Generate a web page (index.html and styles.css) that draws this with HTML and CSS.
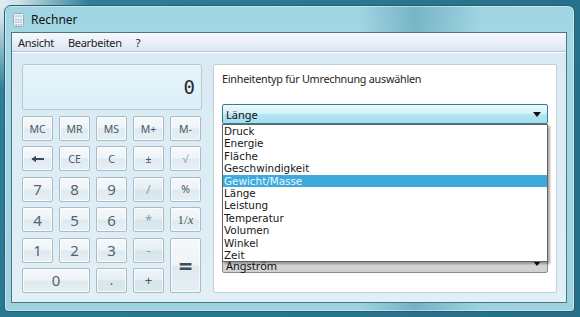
FILE: index.html
```html
<!DOCTYPE html>
<html lang="de">
<head>
    <meta charset="UTF-8">
    <title>Rechner</title>
    <link rel="stylesheet" href="styles.css">
</head>
<body>
    <div class="window">
        <div class="titlebar">
            <svg class="app-icon" width="11" height="14" viewBox="0 0 11 14">
                <rect x="0.5" y="0.5" width="10" height="13" rx="1" fill="#eef3f5" stroke="#9aaab2"/>
                <rect x="2" y="2" width="7" height="2.5" fill="#c9dde6"/>
                <g fill="#b7c6cd">
                    <rect x="2" y="6" width="2" height="1.5"/><rect x="4.5" y="6" width="2" height="1.5"/><rect x="7" y="6" width="2" height="1.5"/>
                    <rect x="2" y="8.5" width="2" height="1.5"/><rect x="4.5" y="8.5" width="2" height="1.5"/><rect x="7" y="8.5" width="2" height="1.5"/>
                    <rect x="2" y="11" width="2" height="1.5"/><rect x="4.5" y="11" width="2" height="1.5"/><rect x="7" y="11" width="2" height="1.5"/>
                </g>
            </svg>
            <span class="title">Rechner</span>
        </div>
        <div class="client">
            <nav class="menubar">
                <span>Ansicht</span>
                <span>Bearbeiten</span>
                <span>?</span>
            </nav>
            <div class="content">
                <section class="calc">
                    <div class="display">0</div>
                    <div class="keys">
                        <button class="key key-small">MC</button>
                        <button class="key key-small">MR</button>
                        <button class="key key-small">MS</button>
                        <button class="key key-small">M+</button>
                        <button class="key key-small">M-</button>

                        <button class="key">
                            <svg width="14" height="8" viewBox="0 0 14 8">
                                <path d="M1 4H13" stroke="#3e4a52" stroke-width="2"/>
                                <path d="M0.5 4L5 0.8V7.2Z" fill="#3e4a52"/>
                            </svg>
                        </button>
                        <button class="key key-small">CE</button>
                        <button class="key key-small">C</button>
                        <button class="key key-small">±</button>
                        <button class="key key-small key-faint">√</button>

                        <button class="key key-num">7</button>
                        <button class="key key-num">8</button>
                        <button class="key key-num">9</button>
                        <button class="key key-op key-faint">/</button>
                        <button class="key key-small">%</button>

                        <button class="key key-num">4</button>
                        <button class="key key-num">5</button>
                        <button class="key key-num">6</button>
                        <button class="key key-op key-faint">*</button>
                        <button class="key key-inv">1/<i>x</i></button>

                        <button class="key key-num">1</button>
                        <button class="key key-num">2</button>
                        <button class="key key-num">3</button>
                        <button class="key key-op key-faint">-</button>
                        <button class="key key-equals">=</button>

                        <button class="key key-num key-zero">0</button>
                        <button class="key key-op">.</button>
                        <button class="key key-op">+</button>
                    </div>
                </section>
                <section class="converter">
                    <div class="conv-label">Einheitentyp für Umrechnung auswählen</div>
                    <div class="combo-wrap">
                        <div class="combo combo-open">
                            <span>Länge</span>
                            <svg width="8" height="5" viewBox="0 0 8 5"><path d="M0 0H8L4 5Z" fill="#111"/></svg>
                        </div>
                        <ul class="dropdown">
                            <li>Druck</li>
                            <li>Energie</li>
                            <li>Fläche</li>
                            <li>Geschwindigkeit</li>
                            <li class="selected">Gewicht/Masse</li>
                            <li>Länge</li>
                            <li>Leistung</li>
                            <li>Temperatur</li>
                            <li>Volumen</li>
                            <li>Winkel</li>
                            <li>Zeit</li>
                        </ul>
                    </div>
                    <div class="combo combo-grey">
                        <span class="combo-hidden-text">Ångström</span>
                        <svg width="8" height="5" viewBox="0 0 8 5"><path d="M0 0H8L4 5Z" fill="#111"/></svg>
                    </div>
                </section>
            </div>
        </div>
    </div>
</body>
</html>
```

FILE: styles.css
```css
:root {
    --frame: #a4d8e5;
    --frame-dark: #2f5c6c;
    --client-bg: #dcecf4;
    --key-border: #a9bbc5;
    --key-text: #4a5963;
}
html {
    background: radial-gradient(circle at 0 0, #e4edf0 0, #cfe2e8 18px, #2c7f97 90px, #256f88 100%);
}
body {
    margin: 0;
    height: 317px;
    overflow: hidden;
    font-family: 'Noto Sans', 'Open Sans', sans-serif;
}
.window {
    margin: 5px 0 0 4px;
    width: 571px;
    height: 307px;
    box-sizing: border-box;
    border: 1px solid var(--frame-dark);
    border-radius: 7px 7px 4px 4px;
    padding: 0 7px 8px 6px;
    background:
        linear-gradient(90deg, rgba(255,255,255,0) 0, rgba(255,255,255,0) 62%, rgba(40,120,145,0.35) 72%, rgba(255,255,255,0) 84%),
        linear-gradient(180deg, #9fd4e2 0, var(--frame) 30px, #9dd3e1 100%);
    box-shadow: inset 0 0 0 1px rgba(255,255,255,0.45);
}
.titlebar {
    height: 26px;
    display: flex;
    align-items: center;
    gap: 7px;
    padding-left: 2px;
    padding-top: 1px;
    box-sizing: border-box;
}
.app-icon {
    display: block;
}
.title {
    font-size: 12px;
    color: #111;
}
.client {
    width: 556px;
    height: 271px;
    box-sizing: border-box;
    border: 1px solid #4f7383;
    background: linear-gradient(180deg, #d8eaf3 0, #e1eff6 100%);
    display: flex;
    flex-direction: column;
}
.menubar {
    height: 19px;
    box-sizing: border-box;
    display: flex;
    align-items: center;
    gap: 14px;
    padding-left: 6px;
    font-size: 11px;
    letter-spacing: -0.3px;
    color: #1d1d1d;
    background: linear-gradient(180deg, #f6f9fd 0, #e9eff8 50%, #dce6f3 100%);
    border-bottom: 1px solid #b4c4d2;
}
.content {
    flex: 1;
    display: flex;
    gap: 11px;
    padding: 11px 0 0 10px;
    border-top: 1px solid #ffffff;
}
.calc {
    width: 180px;
}
.display {
    height: 46px;
    box-sizing: border-box;
    border: 1px solid #b5cad4;
    border-radius: 2px;
    background: linear-gradient(180deg, #e6f4fa 0, #dcf0f7 100%);
    text-align: right;
    padding: 11px 6px 0 0;
    font-family: 'DejaVu Sans Mono', monospace;
    font-size: 19px;
    color: #2a2a2a;
    margin-bottom: 6px;
}
.keys {
    display: grid;
    grid-template-columns: repeat(5, 31px);
    grid-template-rows: repeat(6, 25px);
    column-gap: 6px;
    row-gap: 5.4px;
}
.key {
    margin: 0;
    padding: 0;
    border: 1px solid var(--key-border);
    border-radius: 2px;
    background: linear-gradient(180deg, #f5f9fb 0, #edf4f7 48%, #dfeaf0 52%, #e6f0f4 100%);
    box-shadow: inset 0 0 0 1px rgba(255,255,255,0.7);
    color: var(--key-text);
    font-family: 'Noto Sans', 'Open Sans', sans-serif;
    font-size: 11px;
    display: flex;
    align-items: center;
    justify-content: center;
}
.key-small {
    font-size: 10.5px;
}
.key-num {
    font-size: 15px;
    color: #55626b;
}
.key-op {
    font-size: 13px;
    background: linear-gradient(180deg, #eef5f8 0, #e4eef3 48%, #d6e5ec 52%, #dde9ef 100%);
}
.key-faint {
    color: #8e9ca4;
}
.key-inv {
    font-family: 'Liberation Serif', serif;
    font-size: 13px;
    color: #4a5660;
}
.key-equals {
    grid-column: 5;
    grid-row: 5 / span 2;
    font-size: 24px;
    font-weight: 700;
    color: #3f4c55;
}
.key-zero {
    grid-column: 1 / span 2;
}
.converter {
    width: 344px;
    height: 229px;
    box-sizing: border-box;
    border: 1px solid #c4ced5;
    border-radius: 2px;
    background: #fff;
    padding: 7px 8px 0 8px;
}
.conv-label {
    font-size: 10.8px;
    letter-spacing: -0.25px;
    line-height: 14px;
    color: #1e1e1e;
}
.combo-wrap {
    position: relative;
    margin-top: 18px;
}
.combo {
    height: 20px;
    width: 326px;
    box-sizing: border-box;
    border-radius: 2px;
    display: flex;
    align-items: center;
    justify-content: space-between;
    padding: 0 6px 0 3px;
    font-size: 11px;
    color: #111;
}
.combo-open {
    border: 1px solid #2f7f96;
    background: linear-gradient(180deg, #eefafd 0, #d5f2f8 45%, #b2e5f0 55%, #a4dfec 100%);
}
.combo-grey {
    margin-top: 129px;
    border: 1px solid #8b8b8b;
    background: linear-gradient(180deg, #f2f2f2 0, #e6e6e6 45%, #d6d6d6 55%, #d0d0d0 100%);
}
.combo-hidden-text {
    line-height: 11px;
    padding-top: 4px;
}
.dropdown {
    position: absolute;
    top: 20px;
    left: 0;
    width: 326px;
    box-sizing: border-box;
    margin: 0;
    padding: 0;
    list-style: none;
    background: #fff;
    border: 1px solid #646464;
    box-shadow: 2px 2px 2px rgba(0, 0, 0, 0.35);
    z-index: 2;
}
.dropdown li {
    font-family: 'DejaVu Sans', sans-serif;
    font-size: 10.4px;
    line-height: 12.4px;
    padding-left: 1px;
    color: #161616;
}
.dropdown .selected {
    background: #3eaadc;
    color: #eaf7ff;
}
```
